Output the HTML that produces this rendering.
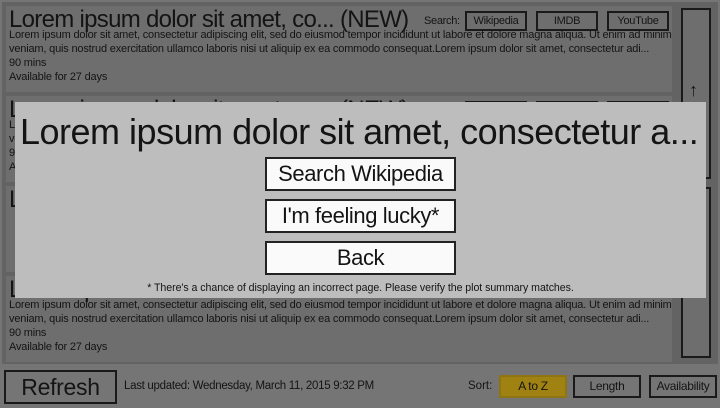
<!DOCTYPE html><html><head><style>
*{box-sizing:border-box;margin:0;padding:0}
body{width:720px;height:408px;background:#757575;font-family:"Liberation Sans",sans-serif;color:#141414;position:relative;overflow:hidden}
.panel{position:absolute;left:2px;top:2px;width:716px;height:362px;background:#636363}
.card{position:absolute;left:6px;width:666px;height:86px;background:#6e6e6e;padding:0 0 0 3px;overflow:hidden}
.t{font-size:24px;letter-spacing:-0.7px;white-space:nowrap;line-height:28px;height:22px}
.b{font-size:11px;letter-spacing:-0.18px;line-height:14px;white-space:nowrap}
.s{position:absolute;font-size:11px;letter-spacing:-0.3px}
.sb{position:absolute;top:5px;width:62px;height:20px;border:2px solid #1a1a1a;font-size:11px;text-align:center;line-height:16px;letter-spacing:-0.3px}
.scr{position:absolute;left:681px;width:30px;border:2px solid #1a1a1a;background:#6e6e6e}
.modal{position:absolute;left:15px;top:102px;width:691px;height:196px;background:#bdbdbd}
.mt{position:absolute;left:5px;top:9px;font-size:36px;letter-spacing:-0.5px;white-space:nowrap}
.mb{position:absolute;left:250px;width:191px;height:34px;background:#fafafa;border:2px solid #222;font-size:22px;text-align:center;line-height:30px;letter-spacing:-0.4px}
.fn{position:absolute;left:0;width:691px;top:180px;text-align:center;font-size:10.6px;letter-spacing:-0.05px}
.btn{position:absolute;border:2px solid #1a1a1a;text-align:center;font-size:12px;letter-spacing:-0.3px}
</style></head><body>
<div class="panel"></div>
<div class="card" style="top:6px"><div class="t">Lorem ipsum dolor sit amet, co... (NEW)</div>
<div class="b">Lorem ipsum dolor sit amet, consectetur adipiscing elit, sed do eiusmod tempor incididunt ut labore et dolore magna aliqua. Ut enim ad minim<br>veniam, quis nostrud exercitation ullamco laboris nisi ut aliquip ex ea commodo consequat.Lorem ipsum dolor sit amet, consectetur adi...<br>90 mins<br>Available for 27 days</div>
<span class="s" style="left:418px;top:9px">Search:</span>
<div class="sb" style="left:459px">Wikipedia</div><div class="sb" style="left:530px">IMDB</div><div class="sb" style="left:601px">YouTube</div></div>
<div class="card" style="top:96px"><div class="t">Lorem ipsum dolor sit amet, co... (NEW)</div>
<div class="b">Lorem<br>veniam<br>90<br>Available</div>
<div class="sb" style="left:459px">Wikipedia</div><div class="sb" style="left:530px">IMDB</div><div class="sb" style="left:601px">YouTube</div></div>
<div class="card" style="top:186px"><div class="t">Lorem</div></div>
<div class="card" style="top:276px"><div class="t">Lorem ipsum</div>
<div class="b">Lorem ipsum dolor sit amet, consectetur adipiscing elit, sed do eiusmod tempor incididunt ut labore et dolore magna aliqua. Ut enim ad minim<br>veniam, quis nostrud exercitation ullamco laboris nisi ut aliquip ex ea commodo consequat.Lorem ipsum dolor sit amet, consectetur adi...<br>90 mins<br>Available for 27 days</div></div>
<div class="scr" style="top:8px;height:171px"><div style="position:absolute;left:6px;top:70px;font-size:18px">↑</div></div>
<div class="scr" style="top:187px;height:171px"></div>
<div class="modal">
<div class="mt">Lorem ipsum dolor sit amet, consectetur a...</div>
<div class="mb" style="top:55px">Search Wikipedia</div>
<div class="mb" style="top:97px">I'm feeling lucky*</div>
<div class="mb" style="top:139px">Back</div>
<div class="fn">* There's a chance of displaying an incorrect page. Please verify the plot summary matches.</div>
</div>
<div class="btn" style="left:4px;top:370px;width:113px;height:34px;font-size:23px;line-height:30px">Refresh</div>
<div style="position:absolute;left:124px;top:380px;font-size:11.5px;letter-spacing:-0.3px">Last updated: Wednesday, March 11, 2015 9:32 PM</div>
<div style="position:absolute;left:468px;top:380px;font-size:11.5px">Sort:</div>
<div class="btn" style="left:499px;top:375px;width:68px;height:23px;line-height:19px;background:#a08212;border-color:#8e7412">A to Z</div>
<div class="btn" style="left:573px;top:375px;width:68px;height:23px;line-height:19px">Length</div>
<div class="btn" style="left:649px;top:375px;width:68px;height:23px;line-height:19px">Availability</div>
</body></html>
